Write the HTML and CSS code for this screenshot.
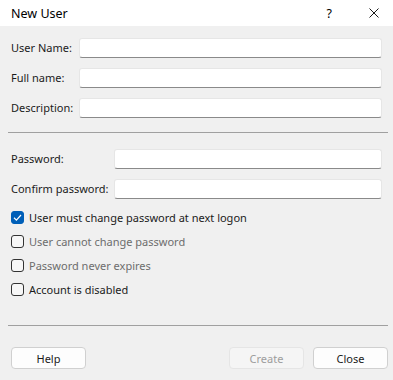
FILE: index.html
```html
<!DOCTYPE html>
<html>
<head>
<meta charset="utf-8">
<title>New User</title>
<link rel="stylesheet" href="styles.css">
</head>
<body>
<div class="dialog">
  <div class="titlebar">
    <span class="title">New User</span>
    <span class="help-q">?</span>
    <svg class="close-x" width="10" height="10" viewBox="0 0 10 10"><path d="M0.5 0.5 L9.5 9.5 M9.5 0.5 L0.5 9.5" stroke="#1a1a1a" stroke-width="1" fill="none"/></svg>
  </div>
  <div class="content">
    <div class="group group-a">
      <label class="lbl">User Name:</label><div class="field"></div>
      <label class="lbl">Full name:</label><div class="field"></div>
      <label class="lbl">Description:</label><div class="field"></div>
    </div>
    <div class="sep sep-1"></div>
    <div class="group group-b">
      <label class="lbl">Password:</label><div class="field"></div>
      <label class="lbl">Confirm password:</label><div class="field"></div>
    </div>
    <div class="checks">
      <div class="check">
        <span class="box checked"><svg width="13" height="13" viewBox="0 0 13 13"><path d="M3 6.8 L5.4 9.1 L10 4" stroke="#fff" stroke-width="1.2" fill="none"/></svg></span>
        <span class="ctext">User must change password at next logon</span>
      </div>
      <div class="check disabled">
        <span class="box"></span>
        <span class="ctext">User cannot change password</span>
      </div>
      <div class="check disabled">
        <span class="box"></span>
        <span class="ctext">Password never expires</span>
      </div>
      <div class="check">
        <span class="box"></span>
        <span class="ctext">Account is disabled</span>
      </div>
    </div>
    <div class="sep sep-2"></div>
    <div class="buttons">
      <button class="btn">Help</button>
      <span class="spacer"></span>
      <button class="btn btn-disabled">Create</button>
      <button class="btn">Close</button>
    </div>
  </div>
</div>
</body>
</html>
```
FILE: styles.css
```css
html, body {
  margin: 0;
  padding: 0;
}
body {
  background: #f0f0f0;
  font-family: "Noto Sans", "Open Sans", sans-serif;
  font-size: 11px;
  color: #1b1b1b;
}
.dialog {
  width: 393px;
  height: 380px;
  overflow: hidden;
}
.titlebar {
  height: 26px;
  background: #ffffff;
  display: flex;
  align-items: center;
  padding-left: 11px;
  box-sizing: border-box;
}
.title {
  flex: 1;
  font-size: 12.5px;
  color: #000;
}
.help-q {
  font-size: 12.5px;
  color: #000;
  margin-right: 37px;
}
.close-x {
  margin-right: 14px;
}
.content {
  padding: 12px 11px 0 11px;
}
.group {
  display: grid;
  row-gap: 10px;
  align-items: center;
}
.group-a {
  grid-template-columns: 68px 1fr;
}
.group-b {
  grid-template-columns: 103px 1fr;
}
.lbl {
  white-space: nowrap;
  line-height: 20px;
}
.field {
  height: 20px;
  box-sizing: border-box;
  background: #fff;
  border: 1px solid #e6e6e6;
  border-bottom-color: #8a8a8a;
  border-radius: 3px;
}
.sep {
  height: 1px;
  background: #a0a0a0;
  margin-left: -3px;
  margin-right: -6px;
}
.sep-1 {
  margin-top: 14px;
  margin-bottom: 16px;
}
.checks {
  margin-top: 6px;
  display: flex;
  flex-direction: column;
}
.check {
  height: 24px;
  display: flex;
  align-items: center;
}
.box {
  width: 13px;
  height: 13px;
  box-sizing: border-box;
  border: 1px solid #333;
  border-radius: 3px;
  background: #f7f7f7;
  margin-right: 5px;
  display: flex;
}
.box.checked {
  background: #005fb8;
  border-color: #005fb8;
}
.box.checked svg {
  margin: -1px;
}
.disabled .ctext {
  color: #6d6d6d;
}
.sep-2 {
  margin-top: 24px;
}
.buttons {
  display: flex;
  margin-top: 21px;
  margin-right: -6px;
  gap: 9px;
}
.spacer {
  flex: 1;
}
.btn {
  width: 75px;
  height: 22px;
  box-sizing: border-box;
  background: #fdfdfd;
  border: 1px solid #d0d0d0;
  border-radius: 4px;
  font-family: inherit;
  font-size: 11px;
  color: #1b1b1b;
  padding: 0;
}
.btn-disabled {
  background: #f5f5f5;
  border-color: #e5e5e5;
  color: #9d9d9d;
}
```
